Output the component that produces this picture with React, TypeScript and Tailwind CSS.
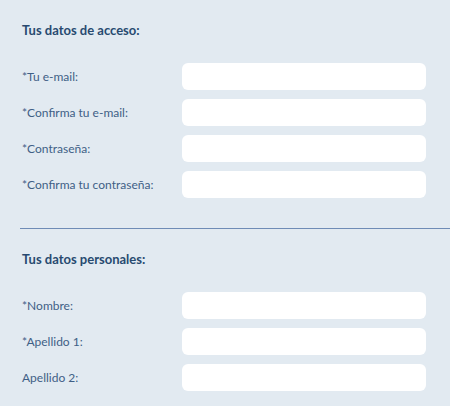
import React from 'react';

const accessFields = ['*Tu e-mail:', '*Confirma tu e-mail:', '*Contraseña:', '*Confirma tu contraseña:'];
const personalFields = ['*Nombre:', '*Apellido 1:', 'Apellido 2:'];

const Field: React.FC<{ label: string }> = ({ label }) => (
  <div className="flex items-center h-[27px]">
    <label className="w-[160px] text-[12px] text-[#3f5f86]">{label}</label>
    <input type="text" className="w-[244px] h-[27px] bg-white rounded-[6px] outline-none" />
  </div>
);

const App: React.FC = () => {
  return (
    <div className="w-[450px] h-[406px] bg-[#e2eaf1] overflow-hidden font-['Lato','Liberation_Sans',sans-serif]">
      {/* Acceso */}
      <div className="pl-[22px] pt-[22px]">
        <h2 className="h-4 leading-4 text-[13px] font-bold text-[#284a70]">Tus datos de acceso:</h2>
        <div className="mt-[25px] flex flex-col gap-[9px]">
          {accessFields.map((f) => (
            <Field key={f} label={f} />
          ))}
        </div>
      </div>

      <div className="ml-[20px] mt-[30px] h-px bg-[#6f8cb6]" />

      {/* Personales */}
      <div className="pl-[22px] pt-[22px]">
        <h2 className="h-4 leading-4 text-[13px] font-bold text-[#284a70]">Tus datos personales:</h2>
        <div className="mt-[25px] flex flex-col gap-[9px]">
          {personalFields.map((f) => (
            <Field key={f} label={f} />
          ))}
        </div>
      </div>
    </div>
  );
};

export default App;
